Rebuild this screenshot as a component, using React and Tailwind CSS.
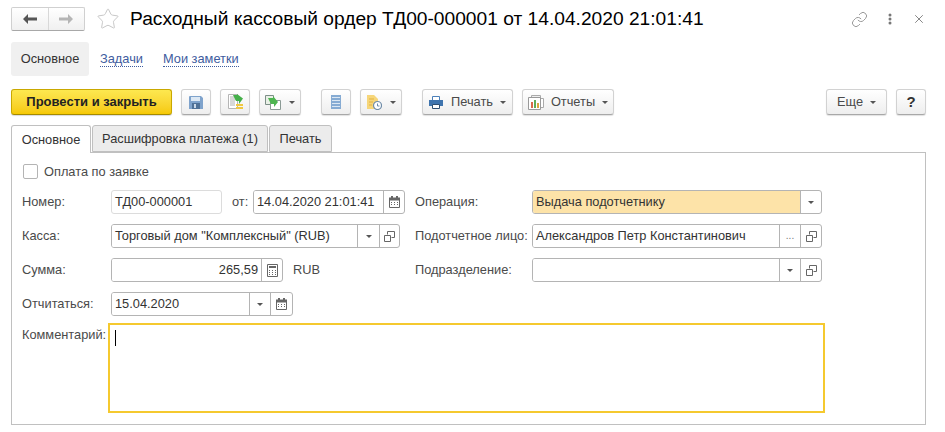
import { Star, X, Link } from 'lucide-react';

const Caret = ({ className = '' }) => (
  <svg width="6" height="3" viewBox="0 0 6 3" className={className}>
    <path d="M0 0h6L3 3z" fill="#555" />
  </svg>
);

const OpenIcon = () => (
  <svg width="11" height="11" viewBox="0 0 11 11" fill="none" stroke="#666">
    <path d="M3.500 3.500v-3h7v6h-3" />
    <path d="M0.500 4.500h6v6h-6z" />
  </svg>
);

const DateIcon = () => (
  <svg width="11" height="12" viewBox="0 0 11 12">
    <path d="M0.500 2.500h10v9h-10z" fill="#fff" stroke="#666" />
    <path d="M0 1.500h11v3H0zM2 0h2v2H2zM7 0h2v2H7z" fill="#666" />
    <path d="M2 6h1v1H2zM5 6h1v1H5zM8 6h1v1H8zM2 8h1v1H2zM5 8h1v1H5zM8 8h1v1H8z" fill="#666" />
  </svg>
);

const CalcIcon = () => (
  <svg width="11" height="13" viewBox="0 0 11 13">
    <path d="M0.500 0.500h10v12h-10z" fill="#fff" stroke="#666" />
    <path d="M2 2h7v2H2zM2 6h1v1H2zM5 6h1v1H5zM8 6h1v1H8zM2 8h1v1H2zM5 8h1v1H5zM8 8h1v1H8zM2 10h1v1H2zM5 10h1v1H5zM8 10h1v1H8z" fill="#666" />
  </svg>
);

const SaveIcon = () => (
  <svg width="14" height="13" viewBox="0 0 14 13">
    <path d="M0 1a1 1 0 0 1 1-1h11l2 2v11H0z" fill="#7fa3cc" />
    <path d="M2 1h9v4H2z" fill="#dce8f4" />
    <path d="M3 7h8v6H3z" fill="#4f7197" />
    <path d="M5 8h2v4H5z" fill="#c9d8e8" />
  </svg>
);

const PostIcon = () => (
  <svg width="15" height="16" viewBox="0 0 15 16">
    <path d="M0.500 0.500h9v14h-9z" fill="#fff" stroke="#b5b5b5" />
    <path d="M2 3h6M2 5h6M2 7h5M2 9h5M2 11h5" stroke="#b0b0b0" />
    <path d="M5 1h4V0l6 4.500L11 10V7H8z" fill="#45b04a" />
    <path d="M8 10h7v2H8zM8 13h7v2H8z" fill="#f0c840" />
  </svg>
);

const CopyIcon = () => (
  <svg width="16" height="15" viewBox="0 0 16 15">
    <path d="M0.500 0.500h8v9h-8z" fill="#e9f0e6" stroke="#7d8f88" />
    <path d="M5.500 5.500h10v9h-10z" fill="#fff" stroke="#8b9a95" />
    <path d="M3 3h5V1l5 6-4 5V9H6z" fill="#4eb551" />
  </svg>
);

const ListIcon = () => (
  <svg width="10" height="14" viewBox="0 0 10 14">
    <path d="M0 0h10v14H0z" fill="#86abd3" />
    <path d="M1 2.500h8M1 5.500h8M1 8.500h8M1 11.500h8" stroke="#dbe7f3" />
  </svg>
);

const ClockDocIcon = () => (
  <svg width="15" height="15" viewBox="0 0 15 15">
    <path d="M0 0h7l4 4v10H0z" fill="#f6d67a" />
    <path d="M2 4h5M2 7h4M2 10h3" stroke="#e3b240" />
    <circle cx="10.500" cy="10.500" r="4" fill="#fff" stroke="#6f8ca8" strokeWidth="1.200" />
    <path d="M10.500 8.500v2.500h2" stroke="#6f8ca8" fill="none" />
  </svg>
);

const PrintIcon = () => (
  <svg width="14" height="13" viewBox="0 0 14 13">
    <path d="M3.500 0.500h7v4h-7z" fill="#fff" stroke="#4b7fb8" />
    <path d="M0 4h14v6H0z" fill="#3f74ae" />
    <path d="M3.500 8.500h7v4h-7z" fill="#fff" stroke="#2f4f72" />
  </svg>
);

const ReportIcon = () => (
  <svg width="16" height="15" viewBox="0 0 16 15">
    <path d="M3.500 0.500h9v3h-9z" fill="#eee" stroke="#aaa" />
    <path d="M0.500 2.500h12v12h-12z" fill="#fff" stroke="#999" />
    <path d="M13 3.500h2.500v9H13" fill="#fff" stroke="#aaa" />
    <path d="M3 7h2v6H3z" fill="#d96b4a" />
    <path d="M6 5h2v8H6z" fill="#5fae5a" />
    <path d="M9 8h2v5H9z" fill="#d9a73d" />
  </svg>
);

const btn = 'flex items-center justify-center h-[26px] rounded-[3px] border border-[#d2d2d2] border-b-[#a8a8a8] bg-linear-to-b from-white to-[#eeeeee] shadow-[0_1px_1px_rgba(0,0,0,0.12)] text-[#4a4a4a] text-[12.8px]';

const Field = ({ width, text, right, cells = [], className = 'bg-white' }) => (
  <div className="flex h-6 shrink-0 rounded-[3px] border border-[#b4b4b4] bg-white overflow-hidden" style={{ width }}>
    <div className={`flex-1 min-w-0 flex items-center px-[3px] text-[12.8px] text-[#333] whitespace-nowrap ${right ? 'justify-end' : ''} ${className}`}>
      {text}
    </div>
    {cells.map((c, i) => (
      <div key={i} className="flex items-center justify-center border-l border-[#b4b4b4]" style={{ width: c.w }}>
        {c.icon}
      </div>
    ))}
  </div>
);

const Label = ({ w, className = '', children }) => (
  <span className={`shrink-0 text-[12.8px] text-[#4a4a4a] whitespace-nowrap ${className}`} style={{ width: w }}>{children}</span>
);

const Tab = ({ active, w, children }) => (
  <div
    style={{ width: w }}
    className={`flex items-center justify-center rounded-t-[3px] border border-[#c0c0c0] text-[12.8px] text-[#333] ${
      active ? 'h-[28px] -mb-px border-b-0 bg-white relative z-10' : 'h-[27px] bg-[#ececec]'
    }`}
  >
    {children}
  </div>
);

export default function App() {
  return (
    <div className="flex flex-col w-[945px] h-[432px] overflow-hidden bg-white font-['Liberation_Sans',Arial,sans-serif]">
      {/* title bar */}
      <div className="flex items-center h-6 mt-[7px] ml-[11px] mr-[16px]">
        <div className="flex w-[74px] h-6 rounded-[2px] border border-[#d0d0d0] border-b-[#a8a8a8] bg-linear-to-b from-white to-[#f0f0f0]">
          <div className="flex flex-1 items-center justify-center border-r border-[#d8d8d8]">
            <svg width="14" height="10" viewBox="0 0 14 10"><path d="M0 5l5-5v3.500h9v3H5V10z" fill="#555" /></svg>
          </div>
          <div className="flex flex-1 items-center justify-center">
            <svg width="14" height="10" viewBox="0 0 14 10"><path d="M14 5L9 0v3.500H0v3h9V10z" fill="#b5b5b5" /></svg>
          </div>
        </div>
        <Star className="ml-[11px] w-[24px] h-[24px] text-[#c8c8c8]" strokeWidth={1} />
        <h1 className="ml-[10px] text-[19.2px] leading-6 text-black whitespace-nowrap">Расходный кассовый ордер ТД00-000001 от 14.04.2020 21:01:41</h1>
        <Link className="ml-auto w-[17px] h-[17px] text-[#888]" strokeWidth={1.2} />
        <svg width="4" height="12" viewBox="0 0 4 12" className="ml-[20px]">
          <circle cx="2" cy="2" r="1.500" fill="#777" />
          <circle cx="2" cy="6" r="1.500" fill="#777" />
          <circle cx="2" cy="10" r="1.500" fill="#777" />
        </svg>
        <X className="ml-[20px] mr-[3px] w-[14px] h-[14px] text-[#555]" strokeWidth={1.2} absoluteStrokeWidth />
      </div>

      {/* form sections */}
      <div className="flex items-center h-[34px] mt-[11px] ml-[11px] text-[12.8px]">
        <div className="flex items-center justify-center w-[78px] h-full rounded-[3px] bg-[#f0f0f0] text-[#333]">Основное</div>
        <span className="ml-[11px] text-[#3e5c9e] border-b border-dotted border-[#3e5c9e] leading-[14px]">Задачи</span>
        <span className="ml-[20px] text-[#3e5c9e] border-b border-dotted border-[#3e5c9e] leading-[14px]">Мои заметки</span>
      </div>

      {/* command bar */}
      <div className="flex items-center mt-[13px] ml-[11px] mr-[19px]">
        <div className="flex items-center justify-center w-[161px] h-[26px] rounded-[3px] border border-[#c9a800] border-b-[#a58a00] bg-linear-to-b from-[#fde84f] to-[#f6c900] shadow-[0_1px_1px_rgba(0,0,0,0.15)] text-[13px] font-bold text-[#222]">
          Провести и закрыть
        </div>
        <button className={`${btn} w-[30px] ml-[9px]`}><SaveIcon /></button>
        <button className={`${btn} w-[30px] ml-[9px]`}><PostIcon /></button>
        <button className={`${btn} w-[42px] ml-[9px] gap-2`}><CopyIcon /><Caret /></button>
        <button className={`${btn} w-[30px] ml-[20px]`}><ListIcon /></button>
        <button className={`${btn} w-[42px] ml-[9px] gap-2`}><ClockDocIcon /><Caret /></button>
        <button className={`${btn} w-[91px] ml-[20px] gap-[7px]`}><PrintIcon /><span className="ml-px">Печать</span><Caret /></button>
        <button className={`${btn} w-[92px] ml-[9px] gap-[7px]`}><ReportIcon />Отчеты<Caret /></button>
        <button className={`${btn} w-[61px] ml-auto gap-[7px]`}>Еще<Caret /></button>
        <button className={`${btn} w-[30px] ml-[9px] !text-[15px] font-bold !text-[#333]`}>?</button>
      </div>

      {/* tabs */}
      <div className="flex gap-px mt-[10px] ml-[11px] items-end">
        <Tab active w={80}>Основное</Tab>
        <Tab w={176}>Расшифровка платежа (1)</Tab>
        <Tab w={63}>Печать</Tab>
      </div>

      {/* panel */}
      <div className="flex flex-col w-[915px] h-[273px] ml-[11px] pl-[10px] border border-[#c0c0c0]">
        <div className="flex items-center h-[15px] mt-[11px] ml-px">
          <div className="w-[15px] h-[15px] rounded-[2px] border border-[#b4b4b4] bg-white" />
          <span className="ml-[6px] text-[12.8px] text-[#4a4a4a]">Оплата по заявке</span>
        </div>

        <div className="flex items-center mt-[11px]">
          <Label w={89}>Номер:</Label>
          <div className="flex items-center w-[111px] h-6 px-[3px] rounded-[3px] border border-[#dcdcdc] text-[12.8px] text-[#333]">ТД00-000001</div>
          <Label w={21} className="ml-[10px]">от:</Label>
          <Field width={152} text="14.04.2020 21:01:41" cells={[{ w: 21, icon: <DateIcon /> }]} />
          <Label w={117} className="ml-[10px]">Операция:</Label>
          <Field width={290} text="Выдача подотчетнику" className="bg-[#fde3a8]" cells={[{ w: 21, icon: <Caret /> }]} />
        </div>

        <div className="flex items-center mt-[10px]">
          <Label w={89}>Касса:</Label>
          <Field width={289} text={'Торговый дом "Комплексный" (RUB)'} cells={[{ w: 22, icon: <Caret /> }, { w: 20, icon: <OpenIcon /> }]} />
          <Label w={117} className="ml-[15px]">Подотчетное лицо:</Label>
          <Field width={290} text="Александров Петр Константинович" cells={[{ w: 21, icon: <span className="text-[10px] text-[#777] leading-none">...</span> }, { w: 21, icon: <OpenIcon /> }]} />
        </div>

        <div className="flex items-center mt-[10px]">
          <Label w={89}>Сумма:</Label>
          <Field width={172} text="265,59" right cells={[{ w: 21, icon: <CalcIcon /> }]} />
          <Label w={122} className="ml-[10px]">RUB</Label>
          <Label w={117}>Подразделение:</Label>
          <Field width={290} text="" cells={[{ w: 21, icon: <Caret /> }, { w: 21, icon: <OpenIcon /> }]} />
        </div>

        <div className="flex items-center mt-[10px]">
          <Label w={89}>Отчитаться:</Label>
          <Field width={182} text="15.04.2020" cells={[{ w: 21, icon: <Caret /> }, { w: 22, icon: <DateIcon /> }]} />
        </div>

        <div className="flex items-start mt-[7px]">
          <Label w={86} className="mt-[2px]">Комментарий:</Label>
          <div className="w-[717px] h-[90px] pl-[5px] pt-[5px] border-2 border-[#f5c92f]">
            <div className="w-px h-4 bg-black" />
          </div>
        </div>
      </div>
    </div>
  );
}
